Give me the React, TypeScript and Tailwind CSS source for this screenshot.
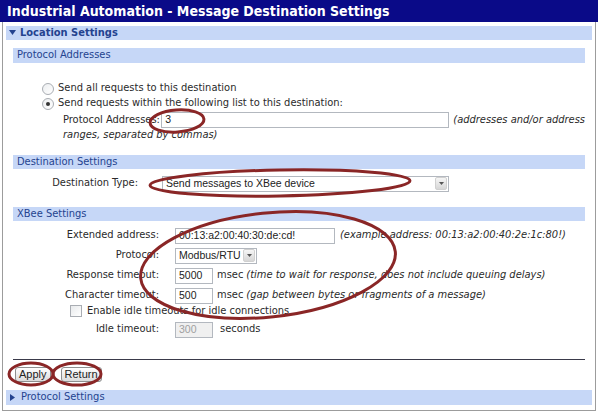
import React from 'react'

const bodyFont = "font-['DejaVu_Sans',sans-serif] font-stretch-condensed"
const fieldFont = "font-['Liberation_Sans',Arial,sans-serif]"

function Bar({
  children,
  bold,
  arrow,
  className = '',
}: {
  children: React.ReactNode
  bold?: boolean
  arrow?: 'down' | 'right'
  className?: string
}) {
  return (
    <div
      className={`flex items-center bg-[#c6d7f7] text-[#24438f] whitespace-nowrap ${bold ? 'font-bold' : ''} ${className}`}
    >
      {arrow === 'down' && (
        <svg width="7" height="6" viewBox="0 0 7 6" className="ml-[3px] mr-[4px]">
          <polygon points="0,0 7,0 3.5,5" fill="#24438f" />
        </svg>
      )}
      {arrow === 'right' && (
        <svg width="6" height="7" viewBox="0 0 6 7" className="ml-[4px] mr-[5px]">
          <polygon points="0,0 5,3.5 0,7" fill="#24438f" />
        </svg>
      )}
      {!arrow && <span className="w-[4px]" />}
      {children}
    </div>
  )
}

function Input({ value, className = '', disabled }: { value: string; className?: string; disabled?: boolean }) {
  return (
    <div
      className={`flex items-center shrink-0 h-[16px] border border-[#b3b8bf] pl-[3px] text-[10.5px] ${fieldFont} ${
        disabled ? 'bg-[#f0f0f0] text-[#a0a0a0]' : 'bg-white text-[#222]'
      } ${className}`}
    >
      {value}
    </div>
  )
}

function Select({ value, className = '' }: { value: string; className?: string }) {
  return (
    <div className={`flex items-center shrink-0 h-[16px] border border-[#b3b8bf] bg-white ${className}`}>
      <span className={`flex-1 pl-[3px] text-[10.5px] text-[#222] ${fieldFont}`}>{value}</span>
      <span className="flex items-center justify-center w-[12px] h-[13px] mr-[1px] rounded-[2px] border border-[#d0d0d0] bg-linear-to-b from-[#f6f6f6] to-[#d6d6d6]">
        <svg width="5" height="3" viewBox="0 0 5 3">
          <polygon points="0,0 5,0 2.5,3" fill="#555" />
        </svg>
      </span>
    </div>
  )
}

function Radio({ checked }: { checked?: boolean }) {
  return (
    <span className="flex items-center justify-center w-[12px] h-[12px] rounded-full border border-[#a9adb3] bg-linear-to-br from-[#eceef0] to-white">
      {checked && <span className="w-[4px] h-[4px] rounded-full bg-[#333]" />}
    </span>
  )
}

function Button({ children }: { children: React.ReactNode }) {
  return (
    <div
      className={`flex items-center justify-center h-[15px] px-[3px] rounded-[3px] border border-[#8e8f8f] bg-linear-to-b from-white to-[#dcdcdc] text-[11px] text-[#222] ${fieldFont}`}
    >
      {children}
    </div>
  )
}

function Row({ label, children, className = '' }: { label: string; children: React.ReactNode; className?: string }) {
  return (
    <div className={`flex items-center h-[15px] whitespace-nowrap ${className}`}>
      <span className="w-[147px] text-right pr-[1px]">{label}</span>
      <div className="flex items-center ml-[15px]">{children}</div>
    </div>
  )
}

export default function App() {
  return (
    <div className={`relative w-[598px] h-[413px] overflow-hidden bg-white text-[11px] text-[#2a2a2a] ${bodyFont}`}>
      {/* Title */}
      <div className="flex items-center h-[22px] pl-[7px] bg-[#0a0a88] text-white font-bold text-[14px]">
        Industrial Automation - Message Destination Settings
      </div>

      <div className="mx-[2px] h-[389px] border border-t-0 border-[#9c9c9c] px-[3px] pt-[4px]">
        <Bar bold arrow="down" className="h-[14px]">
          Location Settings
        </Bar>

        <div className="px-[7px]">
          {/* Protocol Addresses */}
          <Bar className="h-[15px] mt-[8px]">Protocol Addresses</Bar>
          <div className="flex items-center h-[15px] mt-[18px] pl-[29px] gap-[4px]">
            <Radio />
            <span>Send all requests to this destination</span>
          </div>
          <div className="flex items-center h-[15px] pl-[29px] gap-[4px]">
            <Radio checked />
            <span>Send requests within the following list to this destination:</span>
          </div>
          <div className="flex items-center h-[16px] mt-[1px] pl-[50px] whitespace-nowrap">
            <span className="w-[99px]">Protocol Addresses:</span>
            <Input value="3" className="w-[288px]" />
            <span className="ml-[4px] italic">(addresses and/or address</span>
          </div>
          <div className="h-[14px] leading-[14px] pl-[50px] italic">ranges, separated by commas)</div>

          {/* Destination Settings */}
          <Bar className="h-[14px] mt-[13px]">Destination Settings</Bar>
          <div className="flex items-center h-[15px] mt-[7px]">
            <span className="w-[125px] text-right">Destination Type:</span>
            <Select value="Send messages to XBee device" className="ml-[24px] w-[287px]" />
          </div>

          {/* XBee Settings */}
          <Bar className="h-[14px] mt-[16px]">XBee Settings</Bar>
          <Row label="Extended address:" className="mt-[7px]">
            <Input value="00:13:a2:00:40:30:de:cd!" className="w-[160px]" />
            <span className="ml-[5px] italic">(example address: 00:13:a2:00:40:2e:1c:80!)</span>
          </Row>
          <Row label="Protocol:" className="mt-[5px]">
            <Select value="Modbus/RTU" className="w-[82px]" />
          </Row>
          <Row label="Response timeout:" className="mt-[5px]">
            <Input value="5000" className="w-[38px]" />
            <span className="ml-[4px]">msec</span>
            <span className="ml-[3px] italic">(time to wait for response, does not include queuing delays)</span>
          </Row>
          <Row label="Character timeout:" className="mt-[5px]">
            <Input value="500" className="w-[38px]" />
            <span className="ml-[4px]">msec</span>
            <span className="ml-[3px] italic">(gap between bytes or fragments of a message)</span>
          </Row>
          <div className="flex items-center h-[14px] mt-[1px] pl-[57px] gap-[5px]">
            <span className="w-[12px] h-[12px] border border-[#a9adb3] bg-linear-to-br from-[#e8eaec] to-white" />
            <span>Enable idle timeouts for idle connections</span>
          </div>
          <Row label="Idle timeout:" className="mt-[4px]">
            <Input value="300" disabled className="w-[38px]" />
            <span className="ml-[7px]">seconds</span>
          </Row>

          <div className="mt-[22px] h-[1px] bg-[#3a3a4a]" />
          <div className="flex items-center gap-[10px] mt-[7px] pl-[2px]">
            <Button>Apply</Button>
            <Button>Return</Button>
          </div>
        </div>

        <Bar arrow="right" className="h-[15px] mt-[8px]">
          Protocol Settings
        </Bar>
      </div>

      {/* hand-drawn annotation marks */}
      <svg
        className="absolute inset-0 pointer-events-none"
        width="598"
        height="413"
        viewBox="0 0 598 413"
        fill="none"
        stroke="#8a2626"
        strokeWidth="3"
      >
        <ellipse cx="177" cy="121" rx="27" ry="11" transform="rotate(-4 177 121)" />
        <ellipse cx="280" cy="183" rx="130" ry="13" transform="rotate(-1 280 183)" />
        <ellipse cx="268" cy="265" rx="128" ry="52" transform="rotate(-6 268 265)" />
        <ellipse cx="31" cy="374" rx="22" ry="11" />
        <ellipse cx="77" cy="374" rx="24" ry="11" />
      </svg>
    </div>
  )
}
